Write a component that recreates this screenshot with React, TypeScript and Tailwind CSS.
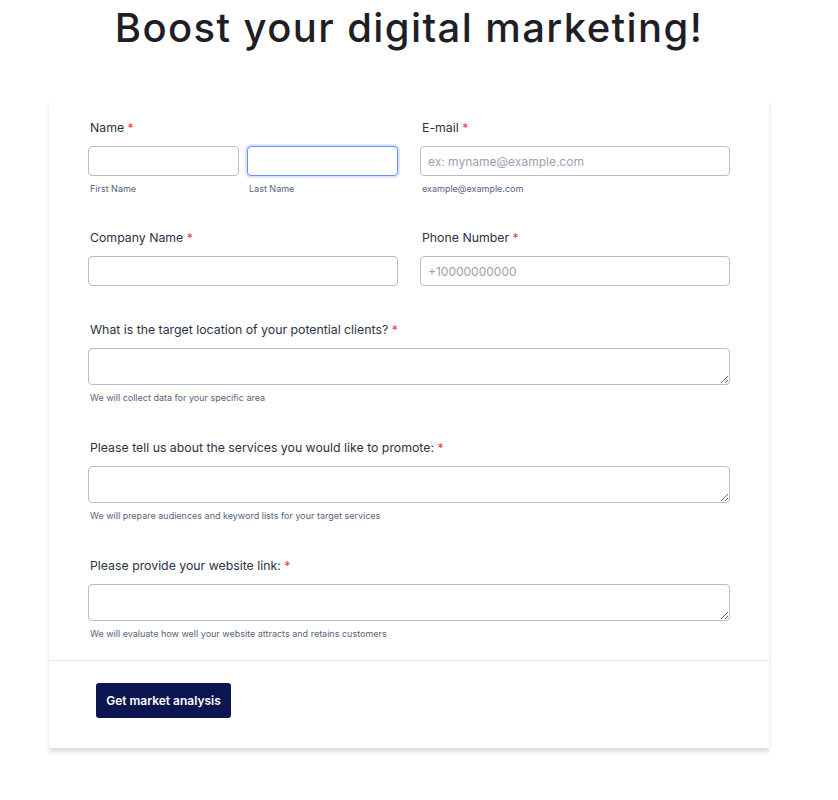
import { useState } from 'react';

const inputCls =
  'h-[30px] w-full rounded-[4px] border border-[#b8bdcb] bg-white px-[7px] text-[12px] text-[#2c3345] outline-none placeholder:text-[#9aa1b3]';

const areaCls =
  'block h-[37px] w-full resize-y rounded-[4px] border border-[#b8bdcb] bg-white px-[7px] py-[6px] text-[12px] text-[#2c3345] outline-none';

function Label({ children }: { children: React.ReactNode }) {
  return (
    <label className="mb-[8px] block pl-[2px] text-[12.3px] leading-[20px] text-[#2c3345]">
      {children} <span className="text-[#f23a3c]">*</span>
    </label>
  );
}

function Hint({ children }: { children: React.ReactNode }) {
  return <p className="mt-[7px] pl-[2px] text-[9px] leading-[12px] text-[#57647e]">{children}</p>;
}

function AreaField({ label, hint }: { label: string; hint: string }) {
  return (
    <div className="mt-[34px]">
      <Label>{label}</Label>
      <textarea className={areaCls} />
      <Hint>{hint}</Hint>
    </div>
  );
}

export default function App() {
  const [email, setEmail] = useState('');
  const [phone, setPhone] = useState('');

  return (
    <div className="min-h-[800px] w-[818px] bg-white pb-[52px] font-['Inter',sans-serif]">
      <h1 className="text-center text-[40px] font-medium leading-[56px] tracking-[1.4px] text-[#1e1e26]">
        Boost your digital marketing!
      </h1>

      <form
        onSubmit={(e) => e.preventDefault()}
        className="mx-auto mt-[44px] w-[720px] bg-white shadow-[0_4px_4px_rgba(87,100,126,0.21)]"
      >
        <div className="px-[39px] pt-[18px] pb-[20px]">
          <div className="grid grid-cols-2 gap-x-[22px]">
            <div>
              <Label>Name</Label>
              <div className="flex gap-[8px]">
                <div className="flex-1">
                  <input className={inputCls} />
                  <Hint>First Name</Hint>
                </div>
                <div className="flex-1">
                  <input className={inputCls + ' !border-[#6a8dff] shadow-[0_0_0_2px_rgba(120,150,255,0.25)]'} />
                  <Hint>Last Name</Hint>
                </div>
              </div>
            </div>
            <div>
              <Label>E-mail</Label>
              <input
                type="email"
                value={email}
                onChange={(e) => setEmail(e.target.value)}
                placeholder="ex: myname@example.com"
                className={inputCls}
              />
              <Hint>example@example.com</Hint>
            </div>
          </div>

          <div className="mt-[33px] grid grid-cols-2 gap-x-[22px]">
            <div>
              <Label>Company Name</Label>
              <input className={inputCls} />
            </div>
            <div>
              <Label>Phone Number</Label>
              <input
                value={phone}
                onChange={(e) => setPhone(e.target.value)}
                placeholder="+10000000000"
                className={inputCls}
              />
            </div>
          </div>

          <AreaField
            label="What is the target location of your potential clients?"
            hint="We will collect data for your specific area"
          />
          <AreaField
            label="Please tell us about the services you would like to promote:"
            hint="We will prepare audiences and keyword lists for your target services"
          />
          <AreaField
            label="Please provide your website link:"
            hint="We will evaluate how well your website attracts and retains customers"
          />
        </div>

        <div className="border-t border-[#e6e6f0] px-[47px] pt-[22px] pb-[30px]">
          <button
            type="submit"
            className="h-[35px] w-[135px] rounded-[3px] bg-[#0a1551] text-[12px] font-semibold text-white"
          >
            Get market analysis
          </button>
        </div>
      </form>
    </div>
  );
}
